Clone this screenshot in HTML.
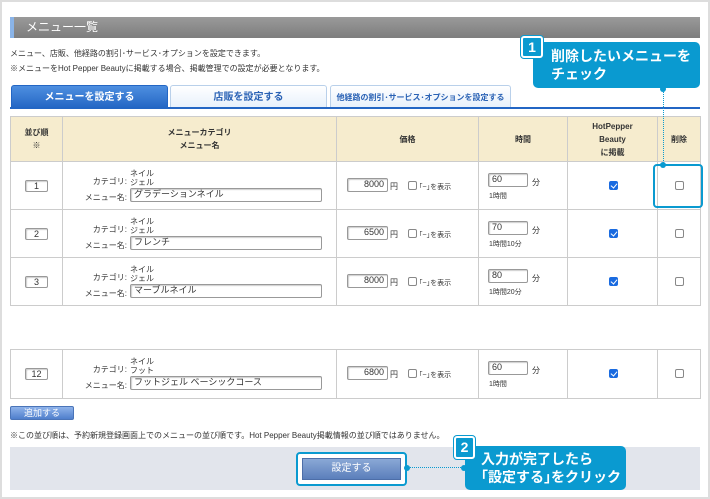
<!DOCTYPE html>
<html><head><meta charset="utf-8"><style>
*{margin:0;padding:0;box-sizing:border-box}
body{width:710px;height:499px;background:#fff;position:relative;overflow:hidden;font-family:"Liberation Sans","Noto Sans CJK JP",sans-serif;color:#333}
.a{position:absolute}
.frame{left:0;top:0;width:710px;height:499px;border:2px solid #ddd}
.hd{left:10px;top:17px;width:690px;height:21px;background:linear-gradient(#9a9a9a,#7d7d7d);border-left:4px solid #8ab4e8;color:#fff;font-size:12px;line-height:21px;padding-left:12px}
.t{font-size:8px;white-space:nowrap}
.lb{position:absolute;left:60px;width:67px;text-align:right;font-size:8px;white-space:nowrap}
.tab{top:85px;height:23px;font-size:10px;font-weight:bold;text-align:center;line-height:23px;border:1px solid #b9d0ea;border-bottom:none;border-radius:3px 3px 0 0;background:linear-gradient(#fff,#e6f0fb);color:#2a62b5}
.tab.on{background:linear-gradient(#4e8fe0,#2366c4);color:#fff;border-color:#2366c4}
.line{left:10px;top:107px;width:690px;height:2px;background:#2366c4}
table{position:absolute;left:10px;border-collapse:collapse;width:690px;table-layout:fixed}
td,th{border:1px solid #ccc;font-size:8px}
th{background:#f6ecce;font-weight:bold;text-align:center;line-height:13px}
.inp{position:absolute;border:1px solid #999;background:#fff;border-radius:2px;font-size:9px;line-height:11px;padding-left:3px;box-shadow:inset 1px 1px 1px #ccc;white-space:nowrap}
.cb{position:absolute;width:9px;height:9px;border:1px solid #888;border-radius:2px;background:#fff}
.cb.on{background:#1a6be0;border-color:#1a6be0}
.cb.on:after{content:"";position:absolute;left:2px;top:0px;width:3px;height:5px;border:solid #fff;border-width:0 1.5px 1.5px 0;transform:rotate(40deg)}
.call{background:#0a9ad0;color:#fff;font-weight:bold;border-radius:5px;font-size:14px;line-height:18px}
.num{background:#0a9ad0;color:#fff;font-weight:bold;font-size:14px;text-align:center;border:2px solid #fff;border-radius:3px;box-shadow:0 0 0 1px #0a9ad0}
.dot{width:6px;height:6px;border-radius:3px;background:#0a9ad0}
.cat{position:absolute;left:130px;font-size:8px;line-height:9px;white-space:nowrap}
.sm{font-size:7px}
</style></head><body>
<div class="a frame"></div>
<div class="a hd">メニュー一覧</div>
<div class="a t" style="left:10px;top:48px">メニュー、店販、他経路の割引･サービス･オプションを設定できます。</div>
<div class="a t" style="left:10px;top:63px">※メニューをHot Pepper Beautyに掲載する場合、掲載管理での設定が必要となります。</div>
<div class="a tab on" style="left:11px;width:157px">メニューを設定する</div>
<div class="a tab" style="left:170px;width:157px">店販を設定する</div>
<div class="a tab" style="left:330px;width:181px;font-size:8px">他経路の割引･サービス･オプションを設定する</div>
<div class="a line"></div>

<table style="top:116px">
<colgroup><col style="width:52px"><col style="width:274px"><col style="width:142px"><col style="width:89px"><col style="width:90px"><col style="width:43px"></colgroup>
<tr style="height:45px"><th>並び順<br>※</th><th>メニューカテゴリ<br>メニュー名</th><th>価格</th><th>時間</th><th>HotPepper<br>Beauty<br>に掲載</th><th>削除</th></tr>
<tr style="height:48px"><td></td><td></td><td></td><td></td><td></td><td></td></tr>
<tr style="height:48px"><td></td><td></td><td></td><td></td><td></td><td></td></tr>
<tr style="height:48px"><td></td><td></td><td></td><td></td><td></td><td></td></tr>
</table>
<table style="top:349px">
<colgroup><col style="width:52px"><col style="width:274px"><col style="width:142px"><col style="width:89px"><col style="width:90px"><col style="width:43px"></colgroup>
<tr style="height:49px"><td></td><td></td><td></td><td></td><td></td><td></td></tr>
</table>

<!-- row1 -->
<div class="inp" style="left:25px;top:180px;width:23px;height:12px;text-align:center;padding:0">1</div>
<div class="lb" style="top:176px">カテゴリ:</div>
<div class="cat" style="top:169px">ネイル<br>ジェル</div>
<div class="lb" style="top:192px">メニュー名:</div>
<div class="inp" style="left:130px;top:188px;width:192px;height:14px">グラデーションネイル</div>
<div class="inp" style="left:347px;top:178px;width:41px;height:14px;text-align:right;padding-right:3px">8000</div>
<div class="a t" style="left:390px;top:181px">円</div>
<div class="cb" style="left:408px;top:181px"></div>
<div class="a t sm" style="left:419px;top:182px">｢~｣を表示</div>
<div class="inp" style="left:488px;top:173px;width:40px;height:14px">60</div>
<div class="a t" style="left:532px;top:177px">分</div>
<div class="a t sm" style="left:489px;top:191px">1時間</div>
<div class="cb on" style="left:609px;top:181px"></div>
<div class="cb" style="left:675px;top:181px"></div>

<!-- row2 -->
<div class="inp" style="left:25px;top:228px;width:23px;height:12px;text-align:center;padding:0">2</div>
<div class="lb" style="top:224px">カテゴリ:</div>
<div class="cat" style="top:217px">ネイル<br>ジェル</div>
<div class="lb" style="top:240px">メニュー名:</div>
<div class="inp" style="left:130px;top:236px;width:192px;height:14px">フレンチ</div>
<div class="inp" style="left:347px;top:226px;width:41px;height:14px;text-align:right;padding-right:3px">6500</div>
<div class="a t" style="left:390px;top:229px">円</div>
<div class="cb" style="left:408px;top:229px"></div>
<div class="a t sm" style="left:419px;top:230px">｢~｣を表示</div>
<div class="inp" style="left:488px;top:221px;width:40px;height:14px">70</div>
<div class="a t" style="left:532px;top:225px">分</div>
<div class="a t sm" style="left:489px;top:239px">1時間10分</div>
<div class="cb on" style="left:609px;top:229px"></div>
<div class="cb" style="left:675px;top:229px"></div>

<!-- row3 -->
<div class="inp" style="left:25px;top:276px;width:23px;height:12px;text-align:center;padding:0">3</div>
<div class="lb" style="top:272px">カテゴリ:</div>
<div class="cat" style="top:265px">ネイル<br>ジェル</div>
<div class="lb" style="top:288px">メニュー名:</div>
<div class="inp" style="left:130px;top:284px;width:192px;height:14px">マーブルネイル</div>
<div class="inp" style="left:347px;top:274px;width:41px;height:14px;text-align:right;padding-right:3px">8000</div>
<div class="a t" style="left:390px;top:277px">円</div>
<div class="cb" style="left:408px;top:277px"></div>
<div class="a t sm" style="left:419px;top:278px">｢~｣を表示</div>
<div class="inp" style="left:488px;top:269px;width:40px;height:14px">80</div>
<div class="a t" style="left:532px;top:273px">分</div>
<div class="a t sm" style="left:489px;top:287px">1時間20分</div>
<div class="cb on" style="left:609px;top:277px"></div>
<div class="cb" style="left:675px;top:277px"></div>

<!-- row12 -->
<div class="inp" style="left:25px;top:368px;width:23px;height:12px;text-align:center;padding:0">12</div>
<div class="lb" style="top:364px">カテゴリ:</div>
<div class="cat" style="top:357px">ネイル<br>フット</div>
<div class="lb" style="top:380px">メニュー名:</div>
<div class="inp" style="left:130px;top:376px;width:192px;height:14px">フットジェル ベーシックコース</div>
<div class="inp" style="left:347px;top:366px;width:41px;height:14px;text-align:right;padding-right:3px">6800</div>
<div class="a t" style="left:390px;top:369px">円</div>
<div class="cb" style="left:408px;top:369px"></div>
<div class="a t sm" style="left:419px;top:370px">｢~｣を表示</div>
<div class="inp" style="left:488px;top:361px;width:40px;height:14px">60</div>
<div class="a t" style="left:532px;top:365px">分</div>
<div class="a t sm" style="left:489px;top:379px">1時間</div>
<div class="cb on" style="left:609px;top:369px"></div>
<div class="cb" style="left:675px;top:369px"></div>

<div class="a" style="left:10px;top:406px;width:64px;height:14px;background:linear-gradient(#8fb3ea,#4f7fcc);border:1px solid #4a74b8;border-radius:2px;color:#fff;font-size:9px;text-align:center;line-height:12px">追加する</div>
<div class="a t" style="left:10px;top:430px">※この並び順は、予約新規登録画面上でのメニューの並び順です。Hot Pepper Beauty掲載情報の並び順ではありません。</div>

<div class="a" style="left:10px;top:447px;width:690px;height:43px;background:#e2e5ec"></div>
<div class="a" style="left:296px;top:452px;width:111px;height:34px;border:2px solid #0a9ad0;border-radius:4px;background:#fff"></div>
<div class="a" style="left:302px;top:458px;width:99px;height:22px;background:linear-gradient(#8aa8d6,#5b7fbb);border:1px solid #4d6ea8;color:#fff;font-size:10px;text-align:center;line-height:20px">設定する</div>
<div class="a" style="left:407px;top:467px;width:56px;border-top:1px dotted #0a9ad0"></div>
<div class="a dot" style="left:404px;top:465px"></div>
<div class="a dot" style="left:461px;top:465px"></div>
<div class="a call" style="left:465px;top:446px;width:161px;height:44px;padding:4px 0 0 16px">入力が完了したら<br>｢設定する｣をクリック</div>
<div class="a num" style="left:454px;top:436px;width:21px;height:23px;line-height:19px">2</div>

<div class="a call" style="left:533px;top:42px;width:167px;height:46px;padding:5px 0 0 18px">削除したいメニューを<br>チェック</div>
<div class="a num" style="left:521px;top:36px;width:22px;height:22px;line-height:18px">1</div>
<div class="a" style="left:663px;top:88px;height:77px;border-left:1px dotted #0a9ad0"></div>
<div class="a dot" style="left:660px;top:86px"></div>
<div class="a dot" style="left:660px;top:162px"></div>
<div class="a" style="left:653px;top:164px;width:50px;height:44px;border:2px solid #0a9ad0;border-radius:4px"></div>
</body></html>
